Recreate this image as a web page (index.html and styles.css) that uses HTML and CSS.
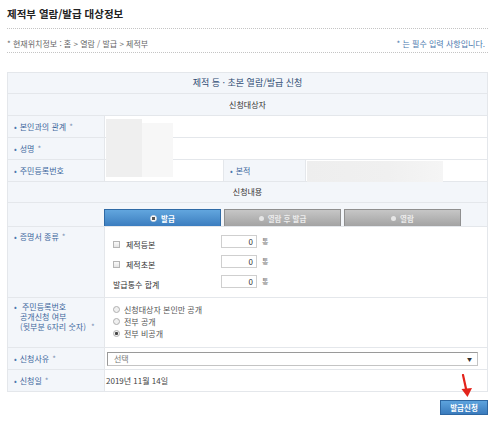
FILE: index.html
```html
<!DOCTYPE html>
<html lang="ko">
<head>
<meta charset="utf-8">
<title>제적부 열람/발급 대상정보</title>
<link rel="stylesheet" href="styles.css">
</head>
<body>
<div class="page">
  <h1 class="title">제적부 열람/발급 대상정보</h1>
  <div class="crumbs">
    <span class="loc">* 현재위치정보 : 홈 &gt; 열람 / 발급 &gt; 제적부</span>
    <span class="req">* 는 필수 입력 사항입니다.</span>
  </div>

  <div class="form">
    <div class="row head">제적 등 · 초본 열람/발급 신청</div>
    <div class="row sub">신청대상자</div>
    <div class="row field">
      <div class="lbl"><span class="b">•</span> 본인과의 관계 <span class="s">*</span></div>
      <div class="val"></div>
    </div>
    <div class="row field">
      <div class="lbl"><span class="b">•</span> 성명 <span class="s">*</span></div>
      <div class="val"></div>
    </div>
    <div class="row field four">
      <div class="lbl"><span class="b">•</span> 주민등록번호</div>
      <div class="val"></div>
      <div class="lbl lbl2"><span class="b">•</span> 본적</div>
      <div class="val"></div>
    </div>
    <div class="row sub sub2">신청내용</div>
    <div class="row tabs">
      <div class="tab on"><span class="ico"></span>발급</div>
      <div class="tab"><span class="ico"></span>열람 후 발급</div>
      <div class="tab"><span class="ico"></span>열람</div>
    </div>
    <div class="row field kinds">
      <div class="lbl top"><span class="b">•</span> 증명서 종류 <span class="s">*</span></div>
      <div class="val list">
        <div class="line"><span class="chk"><span class="cb"></span>제적등본</span><span class="num">0</span><span class="unit">통</span></div>
        <div class="line"><span class="chk"><span class="cb"></span>제적초본</span><span class="num">0</span><span class="unit">통</span></div>
        <div class="line"><span class="chk plain">발급통수 합계</span><span class="num">0</span><span class="unit">통</span></div>
      </div>
    </div>
    <div class="row field open">
      <div class="lbl top multi"><span class="b">•</span> 주민등록번호<br><span class="ind">공개신청 여부</span><br><span class="ind">(뒷부분 6자리 숫자) <span class="s">*</span></span></div>
      <div class="val radios">
        <div class="rline"><span class="rd"></span>신청대상자 본인만 공개</div>
        <div class="rline"><span class="rd"></span>전부 공개</div>
        <div class="rline"><span class="rd checked"></span>전부 비공개</div>
      </div>
    </div>
    <div class="row field">
      <div class="lbl"><span class="b">•</span> 신청사유 <span class="s">*</span></div>
      <div class="val"><div class="select"><span>선택</span><span class="arr">▼</span></div></div>
    </div>
    <div class="row field last">
      <div class="lbl"><span class="b">•</span> 신청일 <span class="s">*</span></div>
      <div class="val date">2019년 11월 14일</div>
    </div>

    <div class="mask m1"></div>
    <div class="mask m2"></div>
    <div class="mask m3"></div>
  </div>

  <div class="actions"><span class="submit">발급신청</span></div>

  <svg class="arrow" width="16" height="26" viewBox="0 0 16 26" aria-hidden="true">
    <path d="M4 1 L7.5 17" stroke="#e3231b" stroke-width="2.2" fill="none" stroke-linecap="round"/>
    <path d="M2.5 15 L13 14 L8.5 23 Z" fill="#e3231b"/>
  </svg>
</div>
</body>
</html>
```

FILE: styles.css
```css
* { box-sizing: border-box; }

html, body {
  margin: 0;
  padding: 0;
  background: #ffffff;
}

body {
  font-family: "Noto Sans CJK KR", "Noto Sans", sans-serif;
  font-size: 8px;
  color: #444;
}

.page {
  position: relative;
  width: 500px;
  height: 421px;
  padding-left: 7px;
}

.title {
  width: 481px;
  margin: 0;
  padding-top: 7px;
  height: 29px;
  font-size: 10.5px;
  line-height: 14px;
  font-weight: bold;
  color: #222;
  border-bottom: 1px dotted #c4c4c4;
}

.crumbs {
  width: 481px;
  height: 24px;
  padding-top: 9px;
  line-height: 11px;
  display: flex;
  justify-content: space-between;
  border-bottom: 1px dotted #c4c4c4;
}

.loc { color: #666; font-size: 8px; }
.req { color: #4a78ae; font-size: 8px; padding-right: 3px; }

.form {
  position: relative;
  width: 481px;
  margin-top: 19px;
  border: 1px solid #e4e7eb;
}

.row {
  border-bottom: 1px solid #e4e7eb;
}

.row.last { border-bottom: none; }

.head {
  height: 21px;
  background: #f3f6fa;
  text-align: center;
  font-size: 9px;
  line-height: 20px;
  color: #2e4a72;
}

.sub {
  height: 22px;
  background: #f3f6fa;
  text-align: center;
  line-height: 21px;
  color: #333;
}

.sub2 { height: 21px; line-height: 20px; }

.field {
  display: grid;
  grid-template-columns: 97px 1fr;
  height: 22px;
}

.field.last { height: 21px; }

.field.four {
  grid-template-columns: 97px 118px 83px 1fr;
}

.lbl {
  background: #f3f6fa;
  border-right: 1px solid #e4e7eb;
  color: #3d679c;
  padding-left: 6px;
  display: flex;
  align-items: center;
  white-space: nowrap;
}

.lbl2 { border-left: 1px solid #e4e7eb; }

.lbl .b { color: #4b76ad; margin-right: 3px; }
.lbl .s { color: #7d92b3; margin-left: 3px; }

.lbl.top {
  align-items: flex-start;
  padding-top: 5px;
  line-height: 10px;
}

.lbl.multi { display: block; padding-top: 4px; }
.lbl .ind { padding-left: 6px; }

.val {
  display: flex;
  align-items: center;
  color: #444;
}

.tabs {
  height: 24px;
  background: #f3f6fa;
  display: flex;
  align-items: flex-end;
  gap: 3px;
  padding-left: 96px;
}

.tab {
  width: 117px;
  height: 17px;
  display: flex;
  align-items: center;
  justify-content: center;
  gap: 4px;
  color: #ececec;
  font-weight: bold;
  font-size: 7.5px;
  background: linear-gradient(#c6c6c6, #a3a3a3);
  border: 1px solid #8f8f8f;
  border-bottom: none;
}

.tab .ico {
  width: 5px;
  height: 5px;
  border-radius: 50%;
  background: #e6e6e6;
}

.tab.on {
  color: #ffffff;
  background: linear-gradient(#62a6de, #3b7dbf);
  border-color: #2f6aa5;
}

.tab.on .ico {
  width: 7px;
  height: 7px;
  background: radial-gradient(circle, #555 0 1.5px, #fff 2px);
  border: 1px solid #e8e8e8;
}

.kinds { height: 71px; }

.list {
  flex-direction: column;
  align-items: stretch;
  padding-top: 7px;
  padding-left: 8px;
}

.line {
  height: 20px;
  display: flex;
  align-items: center;
  color: #333;
}

.chk {
  width: 108px;
  display: flex;
  align-items: center;
}

.cb {
  width: 7px;
  height: 7px;
  border: 1px solid #b5b5b5;
  background: linear-gradient(#fafafa, #e4e4e4);
  margin-right: 6px;
}

.num {
  width: 36px;
  height: 13px;
  margin-top: -6px;
  border: 1px solid #cfcfcf;
  text-align: right;
  padding-right: 3px;
  line-height: 11px;
  color: #333;
}

.unit {
  margin-left: 5px;
  margin-top: -6px;
  color: #777;
  font-size: 7px;
}

.open { height: 50px; }

.radios {
  flex-direction: column;
  align-items: stretch;
  padding-top: 5px;
  padding-left: 8px;
}

.rline {
  height: 12px;
  display: flex;
  align-items: center;
  color: #555;
}

.rd {
  width: 7px;
  height: 7px;
  border-radius: 50%;
  border: 1px solid #b0b0b0;
  background: #f0f0f0;
  margin-right: 4px;
}

.rd.checked {
  background: radial-gradient(circle, #444 0 1.3px, #f0f0f0 1.8px);
}

.select {
  margin-left: 2px;
  width: 371px;
  height: 14px;
  border: 1px solid #c4c4c4;
  border-top-color: #9a9a9a;
  border-left-color: #9a9a9a;
  display: flex;
  align-items: center;
  justify-content: space-between;
  padding: 0 5px 0 6px;
  color: #777;
}

.select .arr { font-size: 5px; color: #333; }

.date { padding-left: 1px; color: #444; }

.mask {
  position: absolute;
  background: #f1f1f1;
}

.m1 { left: 98px; top: 46px; width: 36px; height: 58px; background: #efefef; }
.m2 { left: 134px; top: 50px; width: 31px; height: 54px; background: #f7f7f7; }
.m3 { left: 299px; top: 88px; width: 136px; height: 21px; background: linear-gradient(90deg, #eeeeee 0, #f0f0f0 60%, #f5f5f5 100%); }

.actions {
  width: 481px;
  margin-top: 8px;
  display: flex;
  justify-content: flex-end;
}

.submit {
  width: 48px;
  height: 15px;
  display: flex;
  align-items: center;
  justify-content: center;
  color: #fff;
  font-weight: bold;
  font-size: 7.5px;
  background: linear-gradient(#5da3dd, #3a7bbd);
  border: 1px solid #2e67a2;
}

.arrow {
  position: absolute;
  left: 459px;
  top: 374px;
}
```
